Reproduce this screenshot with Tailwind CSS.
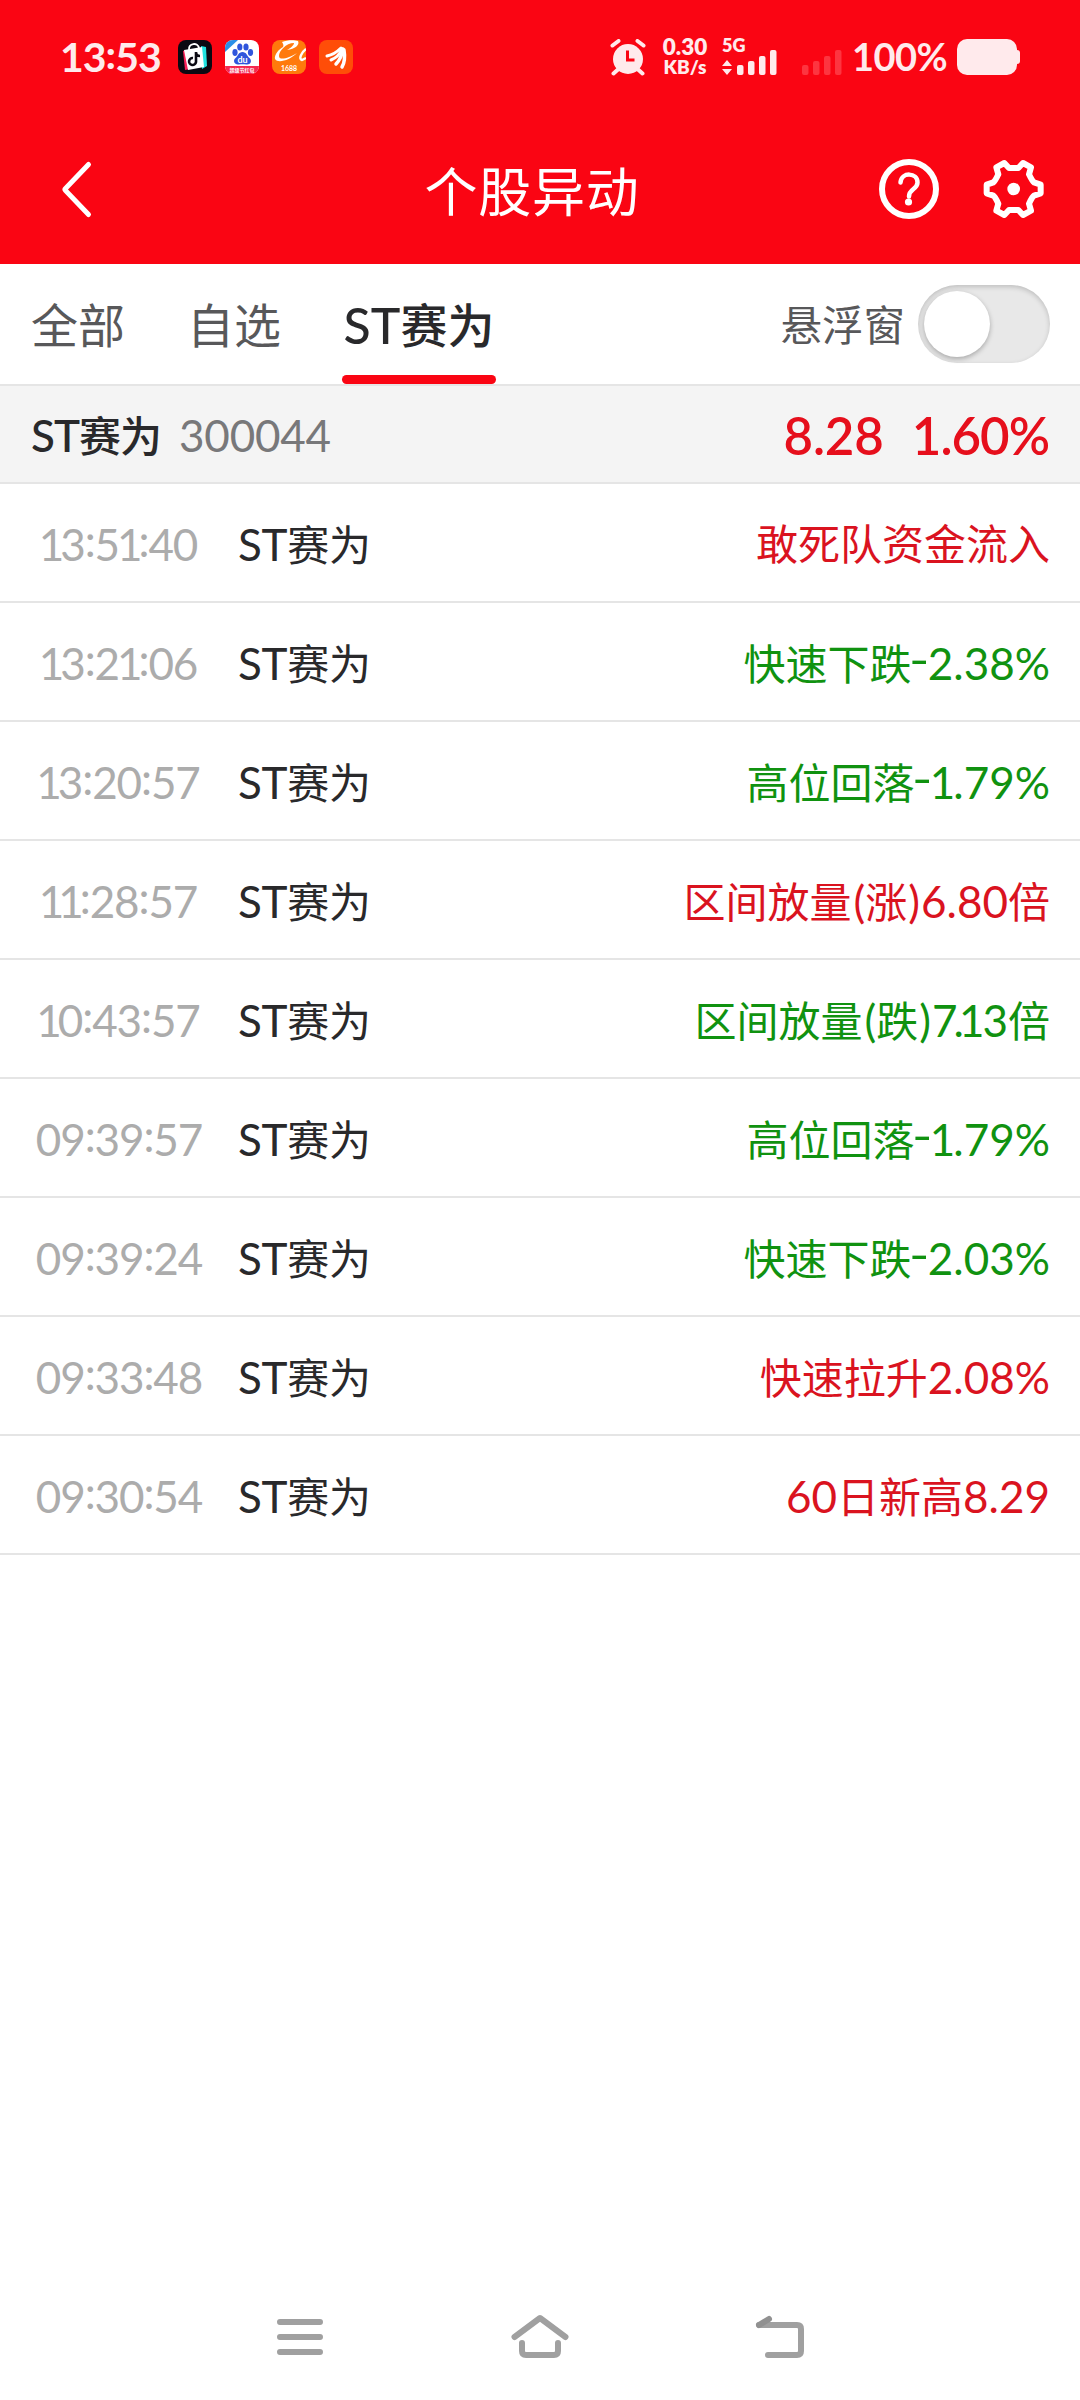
<!DOCTYPE html>
<html lang="zh-CN">
<head>
    <meta charset="UTF-8">
    <meta name="viewport" content="width=device-width, initial-scale=1.0">
    <title>个股异动</title>
    <script src="https://cdn.jsdelivr.net/npm/@tailwindcss/browser@4"></script>
</head>
<body class="bg-white">
    <div class="w-[1080px] h-[2400px] flex flex-col overflow-hidden font-['Lato','Noto_Sans_CJK_SC',sans-serif] text-[42px] leading-none text-[#29292b]">
        <header class="h-[264px] shrink-0 bg-[#fa0513] text-white">
            <!-- Status bar -->
            <div class="h-[114px] pl-[60px] pr-[60px] flex items-center text-[#ffeaec]">
                <div class="w-[118px] pb-[4px] text-[41px] tracking-[-1px] font-bold whitespace-nowrap">13<span class="align-[3px]">:</span>53</div>
                <div class="flex gap-[13px]">
                    <svg class="w-[34px] h-[34px]" viewBox="0 0 34 34">
                        <rect width="34" height="34" rx="8" fill="#0b0912"/>
                        <path d="M5 11l3-1 4 19-5 1z" fill="#fb2159"/>
                        <path d="M23 6l5 1 1 19-5 3z" fill="#20e3e0"/>
                        <path d="M6 10l18-3 2 20-16 3z" fill="#fff"/>
                        <path d="M11 10c-1-7 9-8 10-2" fill="none" stroke="#fff" stroke-width="2"/>
                        <path d="M18 12v10a3.500 3.500 0 1 1-3-4M18 12c0 3 2 4 4 4" fill="none" stroke="#0b0912" stroke-width="2.600"/>
                    </svg>
                    <svg class="w-[34px] h-[34px]" viewBox="0 0 34 34">
                        <rect width="34" height="34" rx="8" fill="#fff"/>
                        <path d="M0 12V8a8 8 0 0 1 8-8h5z" fill="#2a8fe8"/>
                        <path d="M0 26h34a8 8 0 0 1-8 8H8a8 8 0 0 1-8-8z" fill="#f5284f"/>
                        <g fill="#2f55dc">
                            <ellipse cx="10" cy="12.500" rx="2.600" ry="3.400"/>
                            <ellipse cx="14.800" cy="7" rx="2.600" ry="3.600"/>
                            <ellipse cx="21" cy="7" rx="2.600" ry="3.600"/>
                            <ellipse cx="25.500" cy="12.500" rx="2.600" ry="3.400"/>
                            <path d="M17.500 12c4 0 4.500 4 7 6 3 3 1 7-3 6.500-3-.5-5-.5-8 0-4 .5-6-4-3-6.500 2.500-2 3-6 7-6z"/>
                        </g>
                        <text x="17.500" y="23" text-anchor="middle" font-size="9" font-weight="700" fill="#fff">du</text>
                        <text x="17" y="32" text-anchor="middle" font-size="5" font-weight="700" fill="#fff">超级节红包</text>
                    </svg>
                    <svg class="w-[34px] h-[34px]" viewBox="0 0 34 34">
                        <rect width="34" height="34" rx="8" fill="#ff7a0c"/>
                        <path d="M10 2C15 0 22 0 26 1c2 4-3 8-11 9 4-2 7-5 7-7C14 3 7 11 7 16c0 5 10 2 18-3-7 7-19 11-22 6-1-4 4-10 8-12 1-2 0-3-1-5z" fill="#fff"/>
                        <path d="M34 9c-4 3-8 10-4 11l4-2" fill="none" stroke="#fff" stroke-width="2.400"/>
                        <text x="17" y="31" text-anchor="middle" font-size="7" font-weight="700" fill="#fff">1688</text>
                    </svg>
                    <svg class="w-[34px] h-[34px]" viewBox="0 0 34 34" fill="none" stroke="#fff" stroke-linecap="round">
                        <rect width="34" height="34" rx="8" fill="#ff4d08" stroke="none"/>
                        <path d="M8 16c5-1 10-4 14-8" stroke-width="3"/>
                        <path d="M12 20c5-2 9-6 11-11" stroke-width="3"/>
                        <path d="M17 24c4-4 6-9 7-15" stroke-width="3.500"/>
                        <path d="M23 27c3-5 3-11 2-17" stroke-width="3.500"/>
                    </svg>
                </div>
                <div class="flex-1"></div>
                <svg class="w-[36px] h-[37px] mr-[16px]" viewBox="0 0 36 37">
                    <circle cx="18" cy="20" r="15" fill="#ffeaec"/>
                    <path d="M2.500 6.500l6-4.500M33.500 6.500l-6-4.500M3.500 34.500l5-4.500M32.500 34.500l-5-4.500" stroke="#ffeaec" stroke-width="4" stroke-linecap="round"/>
                    <path d="M17.500 11.500v9.500h7" fill="none" stroke="#fa0513" stroke-width="3"/>
                </svg>
                <div class="w-[46px] text-center font-extrabold">
                    <div class="text-[22.500px] leading-[20px]">0.30</div>
                    <div class="text-[19px] leading-[20px] whitespace-nowrap">KB/s</div>
                </div>
                <svg class="w-[56px] h-[38px] ml-[14px] overflow-visible" viewBox="0 0 56 38" fill="#ffeaec">
                    <text x="0" y="14" font-size="18" font-weight="800">5G</text>
                    <path d="M5 22l5 6H0zM5 37l5-6H0z"/>
                    <rect x="15" y="27" width="6.500" height="10" rx="2"/>
                    <rect x="26" y="23" width="6.500" height="14" rx="2"/>
                    <rect x="37" y="18" width="6.500" height="19" rx="2"/>
                    <rect x="48" y="12" width="6.500" height="25" rx="2"/>
                </svg>
                <svg class="w-[40px] h-[38px] ml-[24px]" viewBox="0 0 40 38" fill="#fd3540">
                    <rect x="0" y="27" width="6.500" height="10" rx="2"/>
                    <rect x="11" y="23" width="6.500" height="14" rx="2"/>
                    <rect x="22" y="18" width="6.500" height="19" rx="2"/>
                    <rect x="33" y="12" width="6.500" height="25" rx="2"/>
                </svg>
                <div class="w-[95px] ml-[10px] pb-[3px] text-[38px] font-bold whitespace-nowrap tracking-[-0.5px]">100%</div>
                <svg class="w-[63px] h-[36px] ml-[10px]" viewBox="0 0 63 36" fill="#ffeaec">
                    <rect width="60" height="36" rx="10"/>
                    <rect x="55" y="11" width="8" height="14" rx="3"/>
                </svg>
            </div>
            <!-- Title bar -->
            <div class="h-[150px] px-[35px] flex items-center">
                <svg class="w-[80px] h-[60px] ml-[20px]" viewBox="0 0 80 60" fill="none" stroke="#fff" stroke-width="5" stroke-linecap="round" stroke-linejoin="round">
                    <path d="M33.500 5.500L10.500 29.500q-1 1 0 2l23 24"/>
                </svg>
                <h1 class="flex-1 pl-[50px] pt-[4px] text-center text-[53px] tracking-[0.7px]">个股异动</h1>
                <div class="flex gap-[44px]">
                    <svg class="w-[60px] h-[60px] mt-[1px]" viewBox="0 0 60 60" fill="none" stroke="#fff">
                        <circle cx="30" cy="30" r="27" stroke-width="6"/>
                        <path d="M21.500 23.500c1-11 17-10 17 0 0 7-8.500 6-8.500 14" stroke-width="4.500" stroke-linecap="round"/>
                        <circle cx="29.500" cy="43" r="3.600" fill="#fff" stroke="none"/>
                    </svg>
                    <svg class="w-[62px] h-[62px]" viewBox="430 84 186 186" fill="none" stroke="#fff" stroke-width="18" stroke-linejoin="round">
                        <path d="M441 164l20-7q5-3 15-24l-6-21 24-13 14 15h28l14-15 24 13-6 21q10 21 15 24l20 7v26l-20 7q-5 3-15 24l6 21-24 13-14-15h-28l-14 15-24-13 6-21q-10-21-15-24l-20-7z"/>
                        <circle cx="522" cy="177" r="19" fill="#fff" stroke="none"/>
                    </svg>
                </div>
            </div>
        </header>

        <nav class="h-[122px] shrink-0 pl-[31px] pr-[30px] flex items-center border-b-2 border-[#e5e5e5] text-[47px] text-[#58585a]">
            <a class="h-full flex items-center w-[156px] pt-[3px]">全部</a>
            <a class="h-full flex items-center w-[155px] pt-[3px]">自选</a>
            <a class="h-full w-[154px] flex flex-col text-[#29292b] font-medium">
                <span class="flex-1 flex items-center justify-center pt-[11px] whitespace-nowrap"><span class="text-[50px]">ST</span>赛为</span>
                <span class="h-[9px] rounded-full bg-[#fa0513]"></span>
            </a>
            <span class="ml-auto mr-[13px] pt-[3px] text-[41.500px]">悬浮窗</span>
            <button class="w-[132px] h-[78px] p-[6px] rounded-full bg-[#e8e8e8] shadow-[inset_0_2px_5px_rgba(0,0,0,0.18)]">
                <span class="block size-[66px] rounded-full bg-white shadow-[0_2px_5px_rgba(0,0,0,0.28)]"></span>
            </button>
        </nav>

        <div class="h-[98px] shrink-0 px-[31px] flex items-center bg-[#f4f4f4] border-b-2 border-[#e5e5e5]">
            <span class="w-[130px] pt-[2px] font-medium whitespace-nowrap tracking-[-1px]"><span class="text-[44px]">ST</span>赛为</span>
            <span class="ml-[18px] pt-[2px] text-[44px] tracking-[-0.2px] text-[#78787a]">300044</span>
            <span class="ml-auto pt-[2px] flex gap-[28px] text-[51px] font-semibold text-[#e60f1c]">
                <span class="tracking-[-0.1px]">8.28</span>
                <span class="tracking-[-1px]">1.60%</span>
            </span>
        </div>

        <main id="list"></main>

        <!-- System navigation -->
        <div class="mt-auto h-[126px] shrink-0 flex justify-center gap-[180px] text-[#a0a0a0]">
            <svg class="size-[60px] mt-[33px]" viewBox="0 0 60 60" fill="none" stroke="currentColor" stroke-width="6" stroke-linecap="round">
                <path d="M10 15h40M10 30h40M10 45h40"/>
            </svg>
            <svg class="size-[60px] mt-[33px]" viewBox="0 0 60 60" fill="none" stroke="currentColor" stroke-width="6" stroke-linecap="round" stroke-linejoin="round">
                <path d="M4.500 30L30 11l25.500 19M12 36v8q0 4 4 4h28q4 0 4-4v-8"/>
            </svg>
            <svg class="size-[60px] mt-[33px]" viewBox="0 0 60 60" fill="none" stroke="currentColor" stroke-width="6" stroke-linecap="round">
                <path d="M9 18h38q4 0 4 4v22q0 4-4 4H18"/>
                <path d="M9 18l10-6" stroke="#919191"/>
            </svg>
        </div>
    </div>

    <script>
        const rows = [
            { time: '13:51:40', text: '敢死队资金流入', up: true },
            { time: '13:21:06', text: '快速下跌-2.38%', up: false },
            { time: '13:20:57', text: '高位回落-1.79%', up: false },
            { time: '11:28:57', text: '区间放量(涨)6.80倍', up: true },
            { time: '10:43:57', text: '区间放量(跌)7.13倍', up: false },
            { time: '09:39:57', text: '高位回落-1.79%', up: false },
            { time: '09:39:24', text: '快速下跌-2.03%', up: false },
            { time: '09:33:48', text: '快速拉升2.08%', up: true },
            { time: '09:30:54', text: '60日新高8.29', up: true },
        ];

        // colons sit at mid-height, and "1" is set a little tighter
        const formatTime = (t) => t.replace(/[1:]/g, (c) => c === '1'
            ? '<span class="-ml-[2px] tracking-[-4px]">1</span>'
            : '<span class="align-[4px]">:</span>');

        // latin runs are slightly larger than the Chinese text
        const glyphs = {
            '1': '<span class="-ml-[1px] tracking-[-2px]">1</span>',
            '7.': '<span class="tracking-[-4px]">7.</span>',
            '-': '<span class="inline-block -translate-y-[4px] scale-x-125">-</span>',
            '(': '<span class="pl-[2px]">(</span>',
            ')': '<span class="px-[1px]">)</span>',
        };
        const formatText = (t) => t.replace(/[-\d.%()]+/g, (s) =>
            `<span class="text-[44px]">${s.replace(/7\.|[-1()]/g, (c) => glyphs[c])}</span>`);

        document.getElementById('list').innerHTML = rows.map((r) => `
            <div class="h-[119px] pr-[30px] flex items-center border-b-2 border-[#e5e5e5]">
                <div class="w-[238px] pb-[2px] text-center text-[44px] tracking-[-1.1px] text-[#acacac] whitespace-nowrap">${formatTime(r.time)}</div>
                <div class="pt-[2px] whitespace-nowrap tracking-[-0.3px]"><span class="text-[44px]">ST</span>赛为</div>
                <div class="ml-auto pt-[2px] whitespace-nowrap ${r.up ? 'text-[#da131f]' : 'text-[#109210]'}">${formatText(r.text)}</div>
            </div>
        `).join('');
    </script>
</body>
</html>
